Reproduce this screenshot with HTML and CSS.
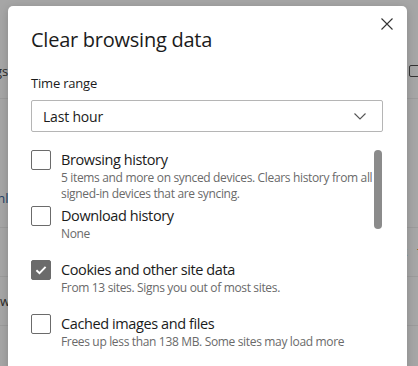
FILE: index.html
```html
<!DOCTYPE html>
<html lang="en">
<head>
    <meta charset="UTF-8">
    <meta name="viewport" content="width=device-width, initial-scale=1.0">
    <title>Clear browsing data</title>
    <link rel="stylesheet" href="styles.css">
</head>
<body>

<!-- Dimmed settings page behind the dialog -->
<div class="backdrop">
    <div class="bg-row bg-row-top">
        <span class="bg-left">Settings</span>
        <span class="bg-icon"></span>
    </div>
    <div class="bg-row bg-row-tall">
        <span class="bg-left bg-link">Download</span>
    </div>
    <div class="bg-row bg-row-mid">
        <span class="bg-left"></span>
        <span class="bg-right">t <b>t</b></span>
    </div>
    <div class="bg-row bg-row-mid">
        <span class="bg-left bg-show">Show</span>
    </div>
    <div class="bg-row bg-row-last"></div>
</div>

<!-- Dialog -->
<div class="dialog">
    <button class="close" type="button" aria-label="Close">
        <svg width="12" height="12" viewBox="0 0 12 12">
            <path d="M0.5 0.5 L11.5 11.5 M11.5 0.5 L0.5 11.5" stroke="#333" stroke-width="1.1" fill="none"/>
        </svg>
    </button>

    <h2 class="title">Clear browsing data</h2>

    <label class="field-label" for="range">Time range</label>
    <div class="select" id="range">
        <span>Last hour</span>
        <svg width="12" height="7" viewBox="0 0 12 7">
            <path d="M0.5 0.5 L6 6 L11.5 0.5" stroke="#555" stroke-width="1.1" fill="none"/>
        </svg>
    </div>

    <div class="list">
        <div class="item">
            <span class="box"></span>
            <div class="item-text">
                <div class="item-title">Browsing history</div>
                <div class="item-desc">5 items and more on synced devices. Clears history from all<br>signed-in devices that are syncing.</div>
            </div>
        </div>
        <div class="item">
            <span class="box"></span>
            <div class="item-text">
                <div class="item-title">Download history</div>
                <div class="item-desc">None</div>
            </div>
        </div>
        <div class="item">
            <span class="box checked">
                <svg width="14" height="14" viewBox="0 0 14 14">
                    <path d="M2.4 7.2 L5.5 10.2 L11.6 3.8" stroke="#fff" stroke-width="1.9" fill="none"/>
                </svg>
            </span>
            <div class="item-text">
                <div class="item-title">Cookies and other site data</div>
                <div class="item-desc">From 13 sites. Signs you out of most sites.</div>
            </div>
        </div>
        <div class="item">
            <span class="box"></span>
            <div class="item-text">
                <div class="item-title">Cached images and files</div>
                <div class="item-desc">Frees up less than 138 MB. Some sites may load more<br>slowly on your next visit.</div>
            </div>
        </div>
        <div class="scroll-thumb"></div>
    </div>
</div>

</body>
</html>
```

FILE: styles.css
```css
/* Basic Reset */
* {
    box-sizing: border-box;
    margin: 0;
    padding: 0;
}

body {
    width: 418px;
    height: 366px;
    overflow: hidden;
    background: #a6a6a6;
    font-family: "Open Sans", "Noto Sans", sans-serif;
    color: #1b1b1b;
    position: relative;
}

/* Backdrop (page dimmed under the overlay) */
.backdrop {
    display: flex;
    flex-direction: column;
}

.bg-row {
    display: flex;
    justify-content: space-between;
    align-items: center;
    border-bottom: 1px solid #9b9b9b;
    font-size: 13px;
    color: #2a2a2a;
}

.bg-row-top {
    height: 99px;
    padding-top: 44px;
}

.bg-row-tall {
    height: 129px;
    align-items: flex-end;
    padding-bottom: 20px;
}

.bg-row-mid {
    height: 49px;
}

.bg-row-last {
    height: 60px;
    border-bottom: none;
}

.bg-left {
    margin-left: -40px;
}

.bg-link {
    margin-left: -30px;
    color: #1f3e66;
}

.bg-show {
    margin-left: -23px;
}

.bg-right {
    margin-right: -6px;
    color: #2a3a55;
    font-family: "Liberation Mono", monospace;
}

.bg-right b {
    font-weight: normal;
    color: #7a4a12;
}

.bg-icon {
    width: 16px;
    height: 12px;
    margin-right: -7px;
    border: 1.5px solid #333;
    border-radius: 2px;
}

/* Dialog */
.dialog {
    position: absolute;
    left: 8px;
    top: 6px;
    width: 399px;
    height: 380px;
    background: #fff;
    border-radius: 5px;
    box-shadow: 0 2px 10px rgba(0, 0, 0, 0.18);
    padding: 20px 24px 0 23px;
}

.close {
    position: absolute;
    top: 12px;
    right: 14px;
    width: 12px;
    height: 12px;
    border: none;
    background: none;
    display: flex;
}

.title {
    font-size: 20px;
    line-height: 28px;
    font-weight: 400;
    letter-spacing: -0.25px;
    color: #1b1b1b;
    margin-bottom: 20px;
}

.field-label {
    display: block;
    font-size: 13px;
    line-height: 18px;
    letter-spacing: -0.2px;
    margin-bottom: 8px;
}

.select {
    display: flex;
    justify-content: space-between;
    align-items: center;
    height: 32px;
    width: 352px;
    border: 1px solid #b5b5b5;
    border-radius: 2px;
    padding: 0 16px 0 11px;
    font-size: 14px;
    letter-spacing: -0.2px;
}

/* Checkbox list */
.list {
    position: relative;
    margin-top: 18px;
    height: 200px;
    overflow: hidden;
}

.item {
    display: flex;
    gap: 10px;
    min-height: 54px;
    padding-bottom: 4px;
}

.box {
    flex: none;
    width: 20px;
    height: 20px;
    border: 1px solid #6b6b6b;
    border-radius: 2px;
    display: flex;
    align-items: center;
    justify-content: center;
}

.box.checked {
    background: #6b6b6b;
}

.item-title {
    font-size: 14.5px;
    line-height: 20px;
    letter-spacing: -0.4px;
}

.item-desc {
    font-size: 12px;
    line-height: 16px;
    letter-spacing: -0.34px;
    white-space: nowrap;
    color: #6a6a6a;
}

.scroll-thumb {
    position: absolute;
    top: 0;
    right: 1px;
    width: 8px;
    height: 79px;
    border-radius: 4px;
    background: #8b8b8b;
}
```
